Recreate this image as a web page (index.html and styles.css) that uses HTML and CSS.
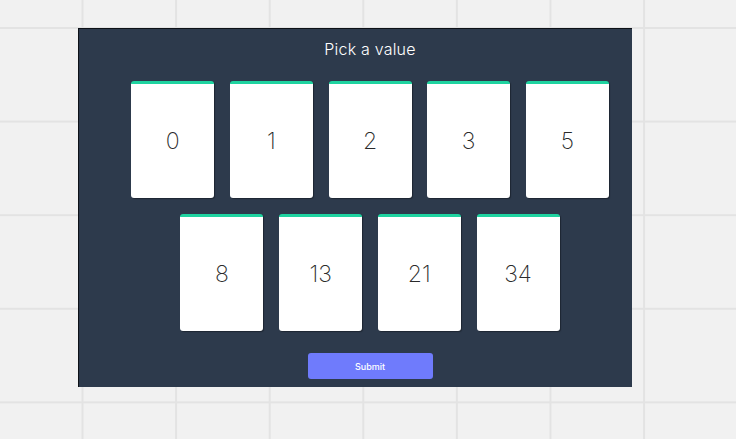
FILE: index.html
```html
<!DOCTYPE html>
<html>
<head>
<meta charset="utf-8">
<link rel="stylesheet" href="styles.css">
</head>
<body>
<div class="panel">
  <h1 class="title">Pick a value</h1>
  <div class="row">
    <div class="card">0</div>
    <div class="card">1</div>
    <div class="card">2</div>
    <div class="card">3</div>
    <div class="card">5</div>
  </div>
  <div class="row">
    <div class="card">8</div>
    <div class="card">13</div>
    <div class="card">21</div>
    <div class="card">34</div>
  </div>
  <button class="submit">Submit</button>
</div>
</body>
</html>
```
FILE: styles.css
```css
html, body {
  margin: 0;
  padding: 0;
}
body {
  width: 736px;
  height: 439px;
  overflow: hidden;
  background-color: #f1f1f1;
  background-image:
    linear-gradient(to right, #e3e3e3 0, #e3e3e3 1.5px, transparent 1.5px),
    linear-gradient(to bottom, #e3e3e3 0, #e3e3e3 1.5px, transparent 1.5px);
  background-size: 93.6px 93.6px;
  background-position: 81.5px 27px;
  font-family: Inter, "Open Sans", sans-serif;
  padding-top: 28px;
  box-sizing: border-box;
}
.panel {
  margin-left: 78px;
  width: 554px;
  height: 359px;
  box-sizing: border-box;
  background: #2d3a4c;
  border-top: 1px solid #0d1117;
  border-left: 1px solid #0d1117;
  padding: 10px 0 0 29px;
  display: flex;
  flex-direction: column;
  align-items: center;
}
.title {
  margin: 0;
  height: 20px;
  line-height: 20px;
  font-size: 16px;
  font-weight: 300;
  color: #ffffff;
  letter-spacing: 0.2px;
}
.row {
  display: flex;
  gap: 15.7px;
  margin-top: 22px;
}
.row + .row {
  margin-top: 16px;
}
.card {
  width: 83px;
  height: 117px;
  box-sizing: border-box;
  background: #ffffff;
  border-top: 3px solid #1fd3a0;
  border-radius: 3px;
  box-shadow: 1px 1px 1px rgba(0, 0, 0, 0.35);
  display: flex;
  align-items: center;
  justify-content: center;
  font-size: 23px;
  font-weight: 200;
  color: #2a2a2a;
  padding-bottom: 1px;
}
.submit {
  margin-top: 22px;
  width: 125px;
  height: 26px;
  border: none;
  border-radius: 3px;
  background: #6f7bfc;
  color: #ffffff;
  font-family: Inter, "Open Sans", sans-serif;
  font-size: 9px;
  font-weight: 500;
  padding: 0;
}
```
